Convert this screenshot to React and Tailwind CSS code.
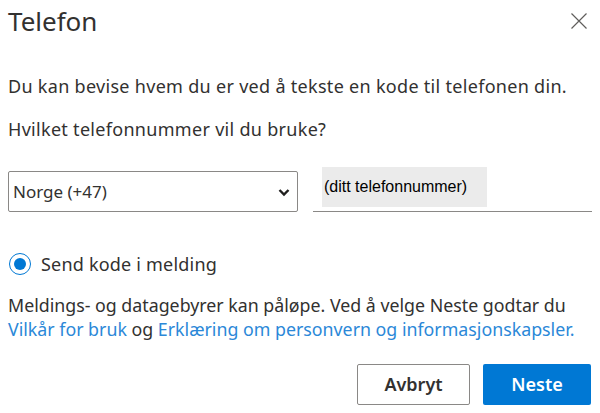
const font = { fontFamily: '"Segoe UI", "Noto Sans", "Open Sans", sans-serif' };

const App = () => {
  return (
    <div className="h-[413px] w-[600px] overflow-hidden bg-white text-[#323130]" style={font}>
      <div className="flex items-start justify-between pl-[8px] pr-[12px] pt-[3px]">
        <h2 className="text-[26px] leading-[36px] font-normal text-[#323130]">Telefon</h2>
        <button className="mt-[9px] text-[#605e5c]" aria-label="Lukk">
          <svg width="18" height="18" viewBox="0 0 18 18" fill="none" stroke="currentColor" strokeWidth="1.2">
            <path d="M1.5 1.5 L16.5 16.5 M16.5 1.5 L1.5 16.5" />
          </svg>
        </button>
      </div>

      <div className="px-[8px]">
        <p className="mt-[35px] text-[18px] leading-[24px] tracking-[0.3px]">
          Du kan bevise hvem du er ved å tekste en kode til telefonen din.
        </p>
        <p className="mt-[19px] text-[18px] leading-[24px] tracking-[0.3px]">Hvilket telefonnummer vil du bruke?</p>

        <div className="mt-[26px] flex items-end gap-[15px]">
          <div className="flex h-[41px] w-[290px] items-center justify-between rounded-[2px] border border-[#8a8886] pl-[4px] pr-[6px]">
            <span className="text-[17px] text-[#323130]">Norge (+47)</span>
            <svg width="14" height="14" viewBox="0 0 14 14" fill="none" stroke="#201f1e" strokeWidth="2.4">
              <path d="M2.5 5 L7 9.5 L11.5 5" />
            </svg>
          </div>
          <div className="flex h-[45px] flex-1 items-start border-b border-[#8a8886] pl-[9px]">
            <div className="flex h-[40px] w-[165px] items-center bg-[#ebebeb] pl-[2px]">
              <span className="text-[16px] text-black" style={{ fontFamily: '"Liberation Sans", Arial, sans-serif' }}>
                (ditt telefonnummer)
              </span>
            </div>
          </div>
        </div>

        <label className="mt-[40px] flex items-center gap-[10px] pl-[1px]">
          <span className="flex h-[22px] w-[22px] items-center justify-center rounded-full border-[1.5px] border-[#0078d4]">
            <span className="h-[12px] w-[12px] rounded-full bg-[#0078d4]" />
          </span>
          <span className="text-[18px] leading-[24px] tracking-[0.2px] text-[#323130]">Send kode i melding</span>
        </label>

        <p className="mt-[17px] text-[17.8px] leading-[24px]">
          Meldings- og datagebyrer kan påløpe. Ved å velge Neste godtar du{" "}
          <a className="text-[#2b88d8]">Vilkår for bruk</a> og{" "}
          <a className="text-[#2b88d8]">Erklæring om personvern og informasjonskapsler.</a>
        </p>

        <div className="mt-[23px] flex justify-end gap-[13px] pr-[1px]">
          <button className="h-[41px] w-[113px] rounded-[2px] border border-[#8a8886] bg-white text-[18px] font-semibold text-[#323130]">
            Avbryt
          </button>
          <button className="h-[41px] w-[108px] rounded-[2px] bg-[#0078d4] text-[18px] font-semibold text-white">
            Neste
          </button>
        </div>
      </div>
    </div>
  );
};

export default App;
